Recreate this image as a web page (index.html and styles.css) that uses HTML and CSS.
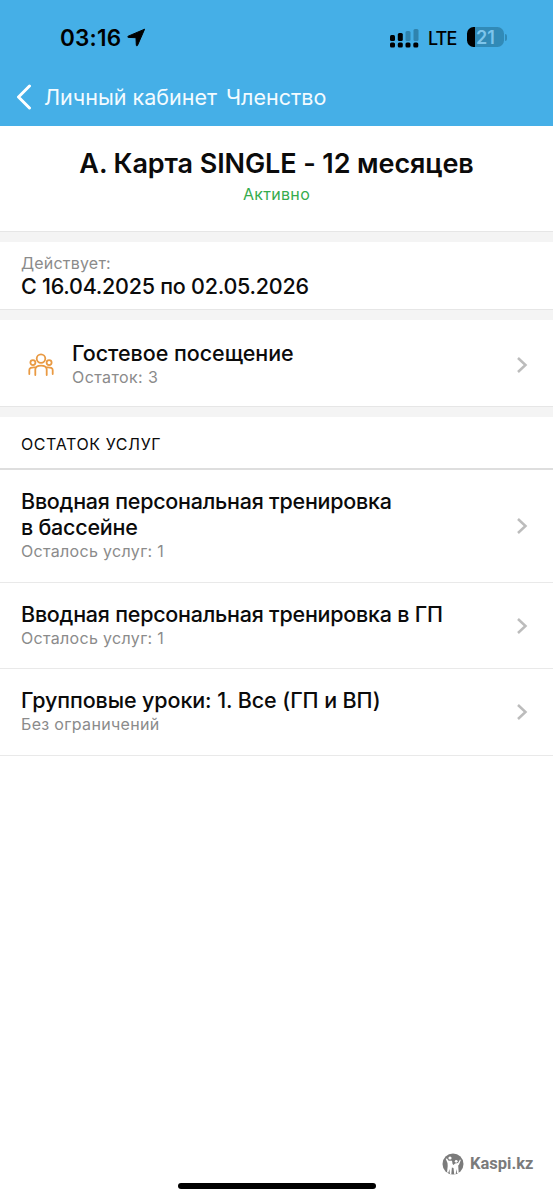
FILE: index.html
```
<!DOCTYPE html>
<html lang="ru">
<head>
<meta charset="utf-8">
<meta name="viewport" content="width=device-width, initial-scale=1">
<title>Членство</title>
<link rel="stylesheet" href="styles.css">
</head>
<body>
<div class="screen">
  <header class="header">
    <div class="status">
      <span class="time">03:16</span>
      <svg class="location" width="19" height="19" viewBox="0 0 19 19"><path d="M17.6 1.2 1.2 8.2C.5 8.6.7 9.3 1.4 9.4L9 9.7 9.3 17.2C9.4 18 10.2 18.1 10.5 17.4Z" fill="#000" stroke="#000" stroke-width="1" stroke-linejoin="round"/></svg>
      <svg class="signal" width="29" height="20" viewBox="0 0 29 20">
        <g fill="#2f83ae"><rect x="15.5" y="3" width="5" height="10" rx="1.5"/><rect x="23.5" y="1" width="5" height="12" rx="1.5"/></g>
        <g><rect x="0" y="7" width="5" height="6" rx="1.5"/><rect x="7.8" y="5" width="5" height="8" rx="1.5"/><rect x="0" y="14.5" width="5" height="5" rx="1.5"/><rect x="7.8" y="14.5" width="5" height="5" rx="1.5"/><rect x="15.5" y="14.5" width="5" height="5" rx="1.5"/><rect x="23.3" y="14.5" width="5" height="5" rx="1.5"/></g>
      </svg>
      <span class="network">LTE</span>
      <span class="battery"><span class="level">21</span></span>
      <span class="battery-tip"></span>
    </div>
    <nav class="nav">
      <svg class="back" width="16" height="26" viewBox="0 0 16 26"><path d="M13.5 2 2.5 13l11 11" fill="none" stroke="#fff" stroke-width="3" stroke-linecap="round" stroke-linejoin="round"/></svg>
      <span class="nav-parent">Личный кабинет</span>
      <span class="nav-current">Членство</span>
    </nav>
  </header>

  <main>
    <section class="hero">
      <h1 class="hero-title">А. Карта SINGLE - 12 месяцев</h1>
      <div class="hero-state">Активно</div>
    </section>
    <div class="divider"></div>
    <section class="period">
      <div class="note note-label">Действует:</div>
      <div class="title title-date">С 16.04.2025 по 02.05.2026</div>
    </section>
    <div class="divider"></div>
    <section class="row row-guest">
      <svg class="people" width="26" height="24" viewBox="0 0 26 24" fill="none" stroke="#e99a43" stroke-width="1.8" stroke-linecap="round">
        <circle cx="13" cy="5.6" r="4.3"/><circle cx="4.900" cy="9.600" r="2.500"/><circle cx="21.100" cy="9.600" r="2.500"/>
        <path d="M7.300 22V16.500C7.300 13.500 9.700 12.700 13 12.700s5.700.8 5.700 3.800V22M1.300 21V17C1.300 14.800 3 14.200 7.300 14.400M24.700 21V17C24.700 14.800 23 14.200 18.700 14.400"/>
      </svg>
      <div class="row-text">
        <div class="title title-guest">Гостевое посещение</div>
        <div class="note note-guest">Остаток: 3</div>
      </div>
      <svg class="chevron" width="12" height="18" viewBox="0 0 12 18"><path d="M2 2l7.500 7L2 16"/></svg>
    </section>
    <div class="divider"></div>
    <h2 class="section-head">ОСТАТОК УСЛУГ</h2>
    <section class="row">
      <div class="row-text">
        <div class="title">Вводная персональная тренировка<br>в бассейне</div>
        <div class="note">Осталось услуг: 1</div>
      </div>
      <svg class="chevron" width="12" height="18" viewBox="0 0 12 18"><path d="M2 2l7.500 7L2 16"/></svg>
    </section>
    <section class="row">
      <div class="row-text">
        <div class="title">Вводная персональная тренировка в ГП</div>
        <div class="note">Осталось услуг: 1</div>
      </div>
      <svg class="chevron" width="12" height="18" viewBox="0 0 12 18"><path d="M2 2l7.500 7L2 16"/></svg>
    </section>
    <section class="row">
      <div class="row-text">
        <div class="title title-group">Групповые уроки: 1. Все (ГП и ВП)</div>
        <div class="note note-group">Без ограничений</div>
      </div>
      <svg class="chevron" width="12" height="18" viewBox="0 0 12 18"><path d="M2 2l7.500 7L2 16"/></svg>
    </section>
  </main>

  <footer class="footer">
    <div class="brand">
      <svg width="22" height="22" viewBox="0 0 22 22"><circle cx="11" cy="11" r="10.500" fill="#7b7b7b"/><g fill="#fff"><circle cx="8" cy="5" r="1.600"/><circle cx="14.200" cy="8.300" r="1.400"/><path d="M3.700 5.800 5 5.500 6.600 7.800 10 7.700 10.600 11 11.500 12 13 10.500 16 10 18 6.500 18.800 7 17 11.700 16.200 12.500 16.700 20H15L14.400 16 13.700 21H12.200L11.500 15 9.900 14.500 9.300 21H7.900L7.400 16 6.500 19.500H5L5.700 13 5.500 10Z"/></g></svg>
      <span class="brand-name">Kaspi.kz</span>
    </div>
    <div class="home-bar"></div>
  </footer>
</div>
</body>
</html>
```
FILE: styles.css
```
* { box-sizing: border-box; }
body { margin: 0; background: #fff; font-family: Inter, "Liberation Sans", sans-serif; color: #0b0b0b; }
.screen { width: 553px; height: 1200px; display: flex; flex-direction: column; overflow: hidden; white-space: nowrap; }
.header { height: 126px; background: #45afe7; }
.status { height: 70px; padding: 6px 0 0 60px; display: flex; align-items: center; color: #000; }
.time { width: 67px; font-size: 22.5px; font-weight: 600; line-height: 26px; letter-spacing: .2px; }
.location { margin-top: -2px; }
.signal { margin: -1px 0 0 244px; }
.network { width: 38px; margin: 1px 0 0 9px; font-size: 18px; font-weight: 500; line-height: 24px; letter-spacing: -.9px; }
.battery { width: 37px; height: 20px; border-radius: 6.5px; margin: -2px 0 0 1px; background: linear-gradient(to right, #000 8px, #318ab7 8px); text-align: center; }
.level { font-size: 18px; font-weight: 600; line-height: 21px; color: #7dc5ec; display: block; }
.battery-tip { width: 2px; height: 7px; margin: -2px 0 0 1px; border-radius: 0 2px 2px 0; background: #318ab7; }
.nav { height: 54px; padding-left: 16px; display: flex; align-items: center; color: #f3fbff; font-size: 21.5px; line-height: 28px; }
.back { margin-right: 12px; }
.nav-parent { width: 182px; }
.hero { height: 105px; padding-top: 22px; text-align: center; }
.hero-title { margin: 0; font-size: 27px; font-weight: 600; line-height: 32px; letter-spacing: -.1px; }
.hero-state { margin-top: 4px; font-size: 16px; line-height: 20px; color: #35ac4d; letter-spacing: .3px; }
.divider { height: 11px; background: #f4f4f4; border-top: 1px solid #e6e6e6; }
.period { height: 67px; padding: 11px 21px 0; }
.title { font-size: 21.5px; font-weight: 500; line-height: 26px; letter-spacing: -.24px; }
.title-guest { letter-spacing: -.04px; }
.title-group { letter-spacing: -.1px; }
.note { margin-top: 1px; font-size: 16px; line-height: 20px; color: #8b8b8b; letter-spacing: .32px; }
.note-label { margin-top: 0; letter-spacing: .2px; }
.note-guest { letter-spacing: .4px; }
.row { display: flex; align-items: center; padding: 18px 25px 20.5px 21px; border-bottom: 1px solid #e9e9e9; }
.row-text { flex: 1; }
.row-guest { height: 86px; padding: 20px 25px 20px 28px; border-bottom: 0; }
.people { margin: 3px 18px 0 0; }
.chevron { fill: none; stroke: #bcbcbc; stroke-width: 2.5; margin-top: 3px; }
.section-head { margin: 0; height: 53px; padding: 17px 21px 0; border-bottom: 2px solid #dedede; font-size: 16px; font-weight: 400; line-height: 20px; letter-spacing: .6px; }
.footer { margin-top: auto; height: 48px; display: flex; flex-direction: column; align-items: center; }
.brand { align-self: flex-end; height: 24px; margin-right: 19px; display: flex; align-items: center; gap: 6px; color: #7b7b7b; }
.brand-name { width: 64px; font: 700 16.5px/24px Roboto, sans-serif; }
.home-bar { width: 198px; height: 6px; margin-top: 7px; border-radius: 3px; background: #000; }
```
